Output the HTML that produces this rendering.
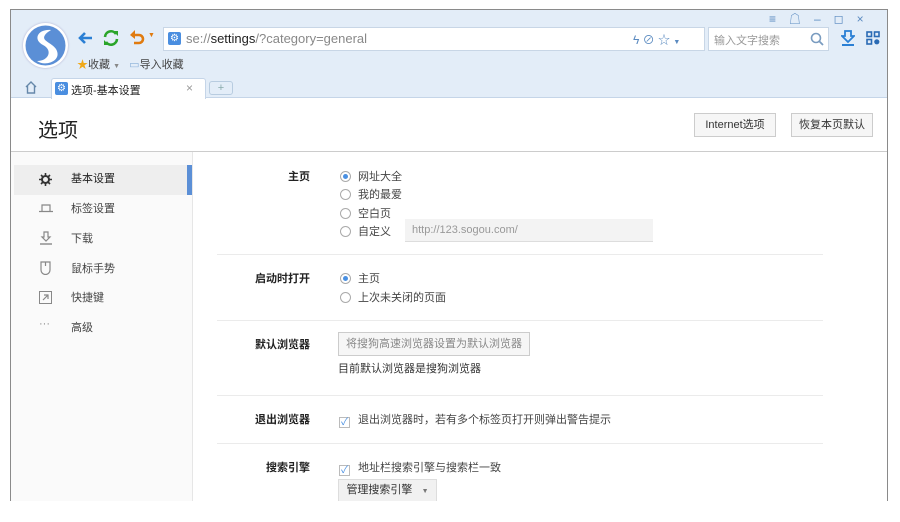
<!DOCTYPE html>
<html><head><meta charset="utf-8"><style>
*{margin:0;padding:0;box-sizing:border-box}
body{width:900px;height:522px;background:#fff;position:relative;overflow:hidden;font-family:"Liberation Sans","Noto Sans CJK SC",sans-serif;font-size:11px;color:#333}
.a{position:absolute}
.win{left:10px;top:9px;width:878px;height:492px;border:1px solid #8a8a8a;border-bottom:none;background:#fff;overflow:hidden}
.top{left:0;top:0;width:878px;height:88px;background:#e3edf8;border-bottom:1px solid #c5d5e8}
.t{white-space:nowrap}
.lbl{width:120px;text-align:right;left:179px;color:#222;font-weight:bold}
.opt{left:329px;color:#444}
.rad{display:inline-block;width:11px;height:11px;border:1px solid #aaa;border-radius:50%;vertical-align:-2px;margin-right:7px;background:#fff;position:relative}
.rad.on::after{content:"";position:absolute;left:2px;top:2px;width:5px;height:5px;border-radius:50%;background:#4a90e2}
.chk{display:inline-block;width:11px;height:11px;border:1px solid #bbb;vertical-align:-2px;margin-right:8px;color:#4a90e2;font-size:10px;line-height:9px;text-align:center}
.hr{height:1px;background:#ebebeb;left:206px;width:606px}
.btn{border:1px solid #ccc;background:#f6f6f6;text-align:center;color:#333}
.side{color:#444}
svg.i{position:absolute}
</style></head><body>
<div class="a win">
 <div class="a top">
  <div class="a" style="left:12px;top:13px;width:45px;height:45px;border-radius:50%;background:#fff;box-shadow:0 0 2px #aac"></div>
  <svg class="a" style="left:12px;top:13px" width="45" height="45" viewBox="0 0 45 45"><circle cx="22.5" cy="22.5" r="20" fill="#5b8fd6"/><path d="M28 7 C14 6 10 17 20 22 C30 27 26 38 14 38 C22 44 40 38 33 26 C28 19 18 18 22 12 C24 9 27 8 28 7Z" fill="#fff"/></svg>
  <svg class="i" style="left:66px;top:20px" width="16" height="16" viewBox="0 0 16 16"><path d="M15 8H3M8 3L3 8l5 5" stroke="#2a7fd4" stroke-width="2.6" fill="none"/></svg>
  <svg class="i" style="left:91px;top:19px" width="18" height="18" viewBox="0 0 18 18"><path d="M3 8a6 6 0 0 1 11-3M15 10a6 6 0 0 1-11 3" stroke="#2aa52a" stroke-width="2.6" fill="none"/><path d="M11 2h5v5z M7 16H2v-5z" fill="#2aa52a"/></svg>
  <svg class="i" style="left:118px;top:19px" width="18" height="18" viewBox="0 0 18 18"><path d="M3 6h7a4 4 0 0 1 0 8H5" stroke="#e07b10" stroke-width="2.6" fill="none"/><path d="M6 1v9L1 6z" fill="#e07b10"/></svg>
  <div class="a t" style="left:137px;top:22px;font-size:7px;color:#e07b10">▼</div>
  <div class="a" style="left:152px;top:17px;width:542px;height:24px;background:#fff;border:1px solid #c8d6e6"></div>
  <div class="a" style="left:157px;top:22px;width:13px;height:13px;background:#4a8ee0;border-radius:2px;color:#fff;font-size:10px;line-height:13px;text-align:center">⚙</div>
  <div class="a t" style="left:175px;top:21px;font-size:13px;color:#888">se://<span style="color:#222">settings</span>/?category=general</div>
  <div class="a t" style="left:622px;top:21px;font-size:12px;color:#5a8ac0">ϟ ⊘ ☆ <span style="font-size:7px">▼</span></div>
  <div class="a" style="left:697px;top:17px;width:121px;height:24px;background:#fff;border:1px solid #c8d6e6"></div>
  <div class="a t" style="left:703px;top:22px;font-size:11px;color:#999">输入文字搜索</div>
  <svg class="i" style="left:799px;top:22px" width="14" height="14" viewBox="0 0 14 14"><circle cx="6" cy="6" r="4.5" stroke="#7a9cc0" stroke-width="1.6" fill="none"/><path d="M9 9l4 4" stroke="#7a9cc0" stroke-width="1.8"/></svg>
  <svg class="i" style="left:830px;top:20px" width="14" height="16" viewBox="0 0 14 16"><path d="M4 1h6v5h3L7 12 1 6h3z" stroke="#2a7fd4" stroke-width="1.8" fill="none"/><path d="M1 15h12" stroke="#2a7fd4" stroke-width="2"/></svg>
  <svg class="i" style="left:855px;top:21px" width="14" height="14" viewBox="0 0 14 14"><g stroke="#2a6ab4" stroke-width="1.6" fill="none"><rect x="1" y="1" width="4.5" height="4.5"/><rect x="8.5" y="1" width="4.5" height="4.5"/><rect x="1" y="8.5" width="4.5" height="4.5"/></g><circle cx="10.8" cy="10.8" r="2.6" fill="#2a6ab4"/></svg>
  <div class="a t" style="left:758px;top:0px;font-size:12px;color:#5a8ac0;letter-spacing:13px">≡☖–◻×</div>
  <div class="a t" style="left:66px;top:46px;font-size:11px;color:#444"><span style="color:#f0a818">★</span>收藏 <span style="font-size:7px;color:#888">▼</span> &nbsp; <span style="color:#8ab0d8">▭</span>导入收藏</div>
  <svg class="i" style="left:13px;top:71px" width="14" height="13" viewBox="0 0 14 13"><path d="M2 6L7 1l5 5M3.5 5v7h7V5" stroke="#6688aa" stroke-width="1.4" fill="none"/></svg>
  <div class="a" style="left:40px;top:68px;width:155px;height:21px;background:#fff;border:1px solid #c5d5e8;border-bottom:none;border-radius:3px 3px 0 0"></div>
  <div class="a" style="left:44px;top:72px;width:13px;height:13px;background:#4a8ee0;border-radius:2px;color:#fff;font-size:10px;line-height:13px;text-align:center">⚙</div>
  <div class="a t" style="left:60px;top:72px;font-size:11px;color:#222">选项-基本设置</div>
  <div class="a t" style="left:175px;top:71px;font-size:12px;color:#999">×</div>
  <div class="a" style="left:198px;top:71px;width:24px;height:14px;border:1px solid #b8cce0;border-radius:3px;color:#8aa;font-size:11px;line-height:12px;text-align:center">+</div>
 </div>
 <div class="a t" style="left:27px;top:104px;font-size:20px;color:#222">选项</div>
 <div class="a btn" style="left:683px;top:103px;width:82px;height:24px;line-height:22px">Internet选项</div>
 <div class="a btn" style="left:780px;top:103px;width:82px;height:24px;line-height:22px">恢复本页默认</div>
 <div class="a" style="left:0;top:141px;width:876px;height:1px;background:#ccc"></div>
 <div class="a" style="left:0;top:142px;width:182px;height:360px;background:#fafafa;border-right:1px solid #e6e6e6"></div>
 <div class="a" style="left:3px;top:155px;width:173px;height:30px;background:#eee"></div>
 <div class="a" style="left:176px;top:155px;width:5px;height:30px;background:#5b8fd6"></div>
 <svg class="i" style="left:28px;top:163px" width="13" height="13" viewBox="0 0 13 13"><circle cx="6.5" cy="6.5" r="3.5" stroke="#333" stroke-width="2" fill="none"/><path d="M6.5 0v3M6.5 10v3M0 6.5h3M10 6.5h3M2 2l2 2M9 9l2 2M2 11l2-2M9 4l2-2" stroke="#333" stroke-width="1.6"/></svg>
 <div class="a side t" style="left:60px;top:160px;color:#222">基本设置</div>
 <svg class="i" style="left:28px;top:193px" width="14" height="10" viewBox="0 0 14 10"><path d="M3 8V2h8v6M0 8.5h14" stroke="#888" stroke-width="1.2" fill="none"/></svg>
 <div class="a side t" style="left:60px;top:190px">标签设置</div>
 <svg class="i" style="left:29px;top:221px" width="12" height="14" viewBox="0 0 12 14"><path d="M4 1h4v5h2L6 10 2 6h2z" stroke="#888" stroke-width="1.2" fill="none"/><path d="M0 13h12" stroke="#888" stroke-width="1.4"/></svg>
 <div class="a side t" style="left:60px;top:220px">下载</div>
 <svg class="i" style="left:29px;top:251px" width="11" height="14" viewBox="0 0 11 14"><path d="M1 1h9v8a4.5 4.5 0 0 1-9 0z M5.5 1v4" stroke="#888" stroke-width="1.2" fill="none"/></svg>
 <div class="a side t" style="left:60px;top:250px">鼠标手势</div>
 <svg class="i" style="left:28px;top:281px" width="13" height="13" viewBox="0 0 13 13"><rect x="0.5" y="0.5" width="12" height="12" stroke="#888" fill="none"/><path d="M4 9l5-5M5 4h4v4" stroke="#888" stroke-width="1.2" fill="none"/></svg>
 <div class="a side t" style="left:60px;top:279px">快捷键</div>
 <div class="a side t" style="left:28px;top:308px;color:#888">···</div><div class="a side t" style="left:60px;top:309px">高级</div>

 <div class="a lbl t" style="top:158px">主页</div>
 <div class="a opt t" style="top:158px"><span class="rad on"></span>网址大全</div>
 <div class="a opt t" style="top:176px"><span class="rad"></span>我的最爱</div>
 <div class="a opt t" style="top:195px"><span class="rad"></span>空白页</div>
 <div class="a opt t" style="top:213px"><span class="rad"></span>自定义</div>
 <div class="a t" style="left:394px;top:209px;width:248px;height:23px;background:#f3f3f3;border-bottom:1px solid #ddd;color:#999;line-height:22px;padding-left:7px">http://123.sogou.com/</div>
 <div class="a hr" style="top:244px"></div>
 <div class="a lbl t" style="top:260px">启动时打开</div>
 <div class="a opt t" style="top:260px"><span class="rad on"></span>主页</div>
 <div class="a opt t" style="top:279px"><span class="rad"></span>上次未关闭的页面</div>
 <div class="a hr" style="top:310px"></div>
 <div class="a lbl t" style="top:326px">默认浏览器</div>
 <div class="a btn t" style="left:327px;top:322px;width:192px;height:24px;line-height:22px;color:#888">将搜狗高速浏览器设置为默认浏览器</div>
 <div class="a t" style="left:327px;top:350px;color:#333">目前默认浏览器是搜狗浏览器</div>
 <div class="a hr" style="top:385px"></div>
 <div class="a lbl t" style="top:401px">退出浏览器</div>
 <div class="a opt t" style="left:328px;top:401px"><span class="chk">✓</span>退出浏览器时，若有多个标签页打开则弹出警告提示</div>
 <div class="a hr" style="top:433px"></div>
 <div class="a lbl t" style="top:449px">搜索引擎</div>
 <div class="a opt t" style="left:328px;top:449px"><span class="chk">✓</span>地址栏搜索引擎与搜索栏一致</div>
 <div class="a btn t" style="left:327px;top:469px;width:99px;height:23px;line-height:21px;background:#f1f1f1;border-color:#ddd">管理搜索引擎 &nbsp; <span style="font-size:7px;color:#777">▼</span></div>
</div>
</body></html>
